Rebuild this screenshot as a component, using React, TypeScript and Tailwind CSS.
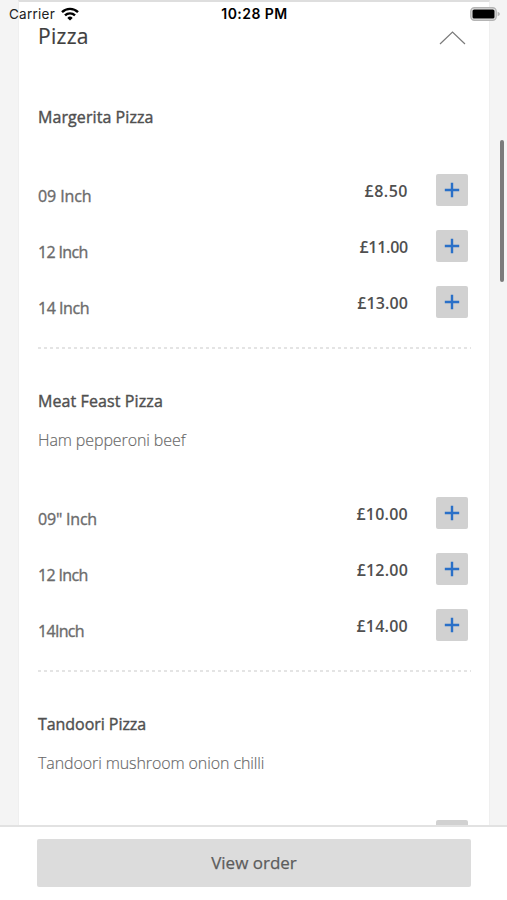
import React, { useState } from "react";

type Option = {
  label: string;
  price: string;
  labelClass: string;
  priceClass: string;
};

type MenuItem = {
  id: string;
  name: string;
  nameClass: string;
  description?: string;
  descriptionClass?: string;
  options: Option[];
};

const menuItems: MenuItem[] = [
  {
    id: "1",
    name: "Margerita Pizza",
    nameClass: "tracking-[0.08px]",
    options: [
      { label: "09 Inch", price: "£8.50", labelClass: "tracking-[-0.1px]", priceClass: "tracking-[0.5px]" },
      { label: "12 Inch", price: "£11.00", labelClass: "tracking-[-0.65px]", priceClass: "tracking-[-0.25px]" },
      { label: "14 Inch", price: "£13.00", labelClass: "tracking-[-0.45px]", priceClass: "tracking-[0.1px]" },
    ],
  },
  {
    id: "2",
    name: "Meat Feast Pizza",
    nameClass: "tracking-[0.1px]",
    description: "Ham pepperoni beef",
    descriptionClass: "tracking-[-0.1px]",
    options: [
      { label: '09" Inch', price: "£10.00", labelClass: "tracking-[-0.2px]", priceClass: "tracking-[0.25px]" },
      { label: "12 Inch", price: "£12.00", labelClass: "tracking-[-0.65px]", priceClass: "tracking-[0.2px]" },
      { label: "14Inch", price: "£14.00", labelClass: "tracking-[-0.7px]", priceClass: "tracking-[0.25px]" },
    ],
  },
  {
    id: "3",
    name: "Tandoori Pizza",
    nameClass: "tracking-[-0.05px]",
    description: "Tandoori mushroom onion chilli",
    descriptionClass: "tracking-[-0.1px]",
    options: [{ label: "", price: "", labelClass: "", priceClass: "" }],
  },
];

const StatusBar = () => {
  return (
    <div className="absolute inset-x-0 top-0 z-10 flex h-7 items-center justify-between pl-[9px] pr-[7px] font-['Inter',sans-serif] text-[13.5px] text-black">
      <div className="flex w-24 items-center gap-[6px]">
        <span className="tracking-[0.25px] text-[#222]">Carrier</span>
        <svg className="h-[14px] w-[18px]" viewBox="0 0 18 14" fill="none" stroke="currentColor" strokeWidth="2.4">
          <path d="M1 5.2a11.4 11.4 0 0 1 16 0" />
          <path d="M4 8.4a7.1 7.1 0 0 1 10 0" />
          <path d="M9 13.6 6.3 10.9a3.8 3.8 0 0 1 5.4 0Z" fill="currentColor" stroke="none" />
        </svg>
      </div>
      <span className="text-sm font-semibold tracking-[0.45px]">10:28 PM</span>
      <div className="flex w-24 justify-end">
        <svg className="h-[14px] w-[30px]" viewBox="0 0 30 14">
          <rect x="0.8" y="0.8" width="25.4" height="12.4" rx="3.6" fill="#e6e6e6" stroke="#b4b4b4" strokeWidth="1.4" />
          <rect x="2.5" y="2.5" width="22" height="9" rx="1.6" fill="#000" />
          <path d="M27.6 4.8c1.6.5 2.2 1.3 2.2 2.2s-.6 1.7-2.2 2.2Z" fill="#b4b4b4" />
        </svg>
      </div>
    </div>
  );
};

const OptionRow = ({ option, onAdd }: { option: Option; onAdd: () => void }) => {
  return (
    <li className="flex h-14 items-center">
      <span
        className={`flex-grow pt-3 text-base text-[#6b6b6b] [-webkit-text-stroke:0.35px_#6b6b6b] ${option.labelClass}`}
      >
        {option.label}
      </span>
      <span className={`pt-px text-base font-semibold text-[#505050] ${option.priceClass}`}>{option.price}</span>
      <button
        onClick={onAdd}
        aria-label="Add"
        className="ml-7 mr-[3px] flex h-8 w-8 items-center justify-center rounded-xs bg-[#d1d1d1] text-[#2a70c8]"
      >
        <svg className="h-4 w-4" viewBox="0 0 16 16" stroke="currentColor" strokeWidth="2.4">
          <path d="M8 .8v14.4M.8 8h14.4" />
        </svg>
      </button>
    </li>
  );
};

const MenuSection = ({ item, onAdd }: { item: MenuItem; onAdd: () => void }) => {
  return (
    <section className="shrink-0">
      <h2
        className={`flex h-[39px] items-center pb-0.5 text-base text-[#505050] [-webkit-text-stroke:0.4px_#505050] ${item.nameClass}`}
      >
        {item.name}
      </h2>
      {item.description && (
        <p
          className={`flex h-[39px] items-center pb-0.5 text-base font-light text-[#666] [-webkit-text-stroke:0.15px_#666] ${item.descriptionClass}`}
        >
          {item.description}
        </p>
      )}
      <ul className="pt-[25px]">
        {item.options.map((option) => (
          <OptionRow key={option.label} option={option} onAdd={onAdd} />
        ))}
      </ul>
      <div className="mt-[17px] mb-[33px] h-[2px] bg-[repeating-linear-gradient(90deg,#e4e4e4_0_3px,transparent_3px_6px)]" />
    </section>
  );
};

const App = () => {
  const [isOpen, setIsOpen] = useState(true);
  const [, setCount] = useState(0);

  return (
    <div className="relative flex h-[900px] w-[507px] flex-col overflow-hidden bg-[#f4f4f4] font-['Open_Sans',sans-serif]">
      <StatusBar />

      <main className="min-h-0 flex-1 overflow-hidden pr-[17px] pl-[18px]">
        <div className="flex h-[1000px] flex-col border-x border-t-2 border-x-[#efefef] border-t-[#dedede] bg-white pr-[18px] pl-[19px]">
          <button
            onClick={() => setIsOpen(!isOpen)}
            className="flex h-[68px] shrink-0 items-center justify-between pr-[5px]"
          >
            <span className="pt-0.5 text-[21px] tracking-[0.3px] text-[#3f3f3f] [-webkit-text-stroke:0.2px_#3f3f3f]">
              Pizza
            </span>
            <svg className="mt-1 h-[14px] w-[27px]" viewBox="0 0 27 14" fill="none" stroke="#7a7a7a" strokeWidth="1.2">
              <path d="M1 13 13.5 1 26 13" />
            </svg>
          </button>
          <div className="mt-7">
            {isOpen &&
              menuItems.map((item) => (
                <MenuSection key={item.id} item={item} onAdd={() => setCount((c) => c + 1)} />
              ))}
          </div>
        </div>
      </main>

      <footer className="h-[75px] shrink-0 border-t-2 border-[#e2e2e2] bg-white px-[37px] pt-3">
        <button className="h-12 w-[434px] rounded-xs bg-[#dcdcdc] text-[17px] text-[#5c5c5c] [-webkit-text-stroke:0.25px_#5c5c5c]">
          View order
        </button>
      </footer>

      <div className="absolute top-[140px] right-[3px] h-[142px] w-1 rounded-full bg-[#7b7b7b]" />
    </div>
  );
};

export default App;
